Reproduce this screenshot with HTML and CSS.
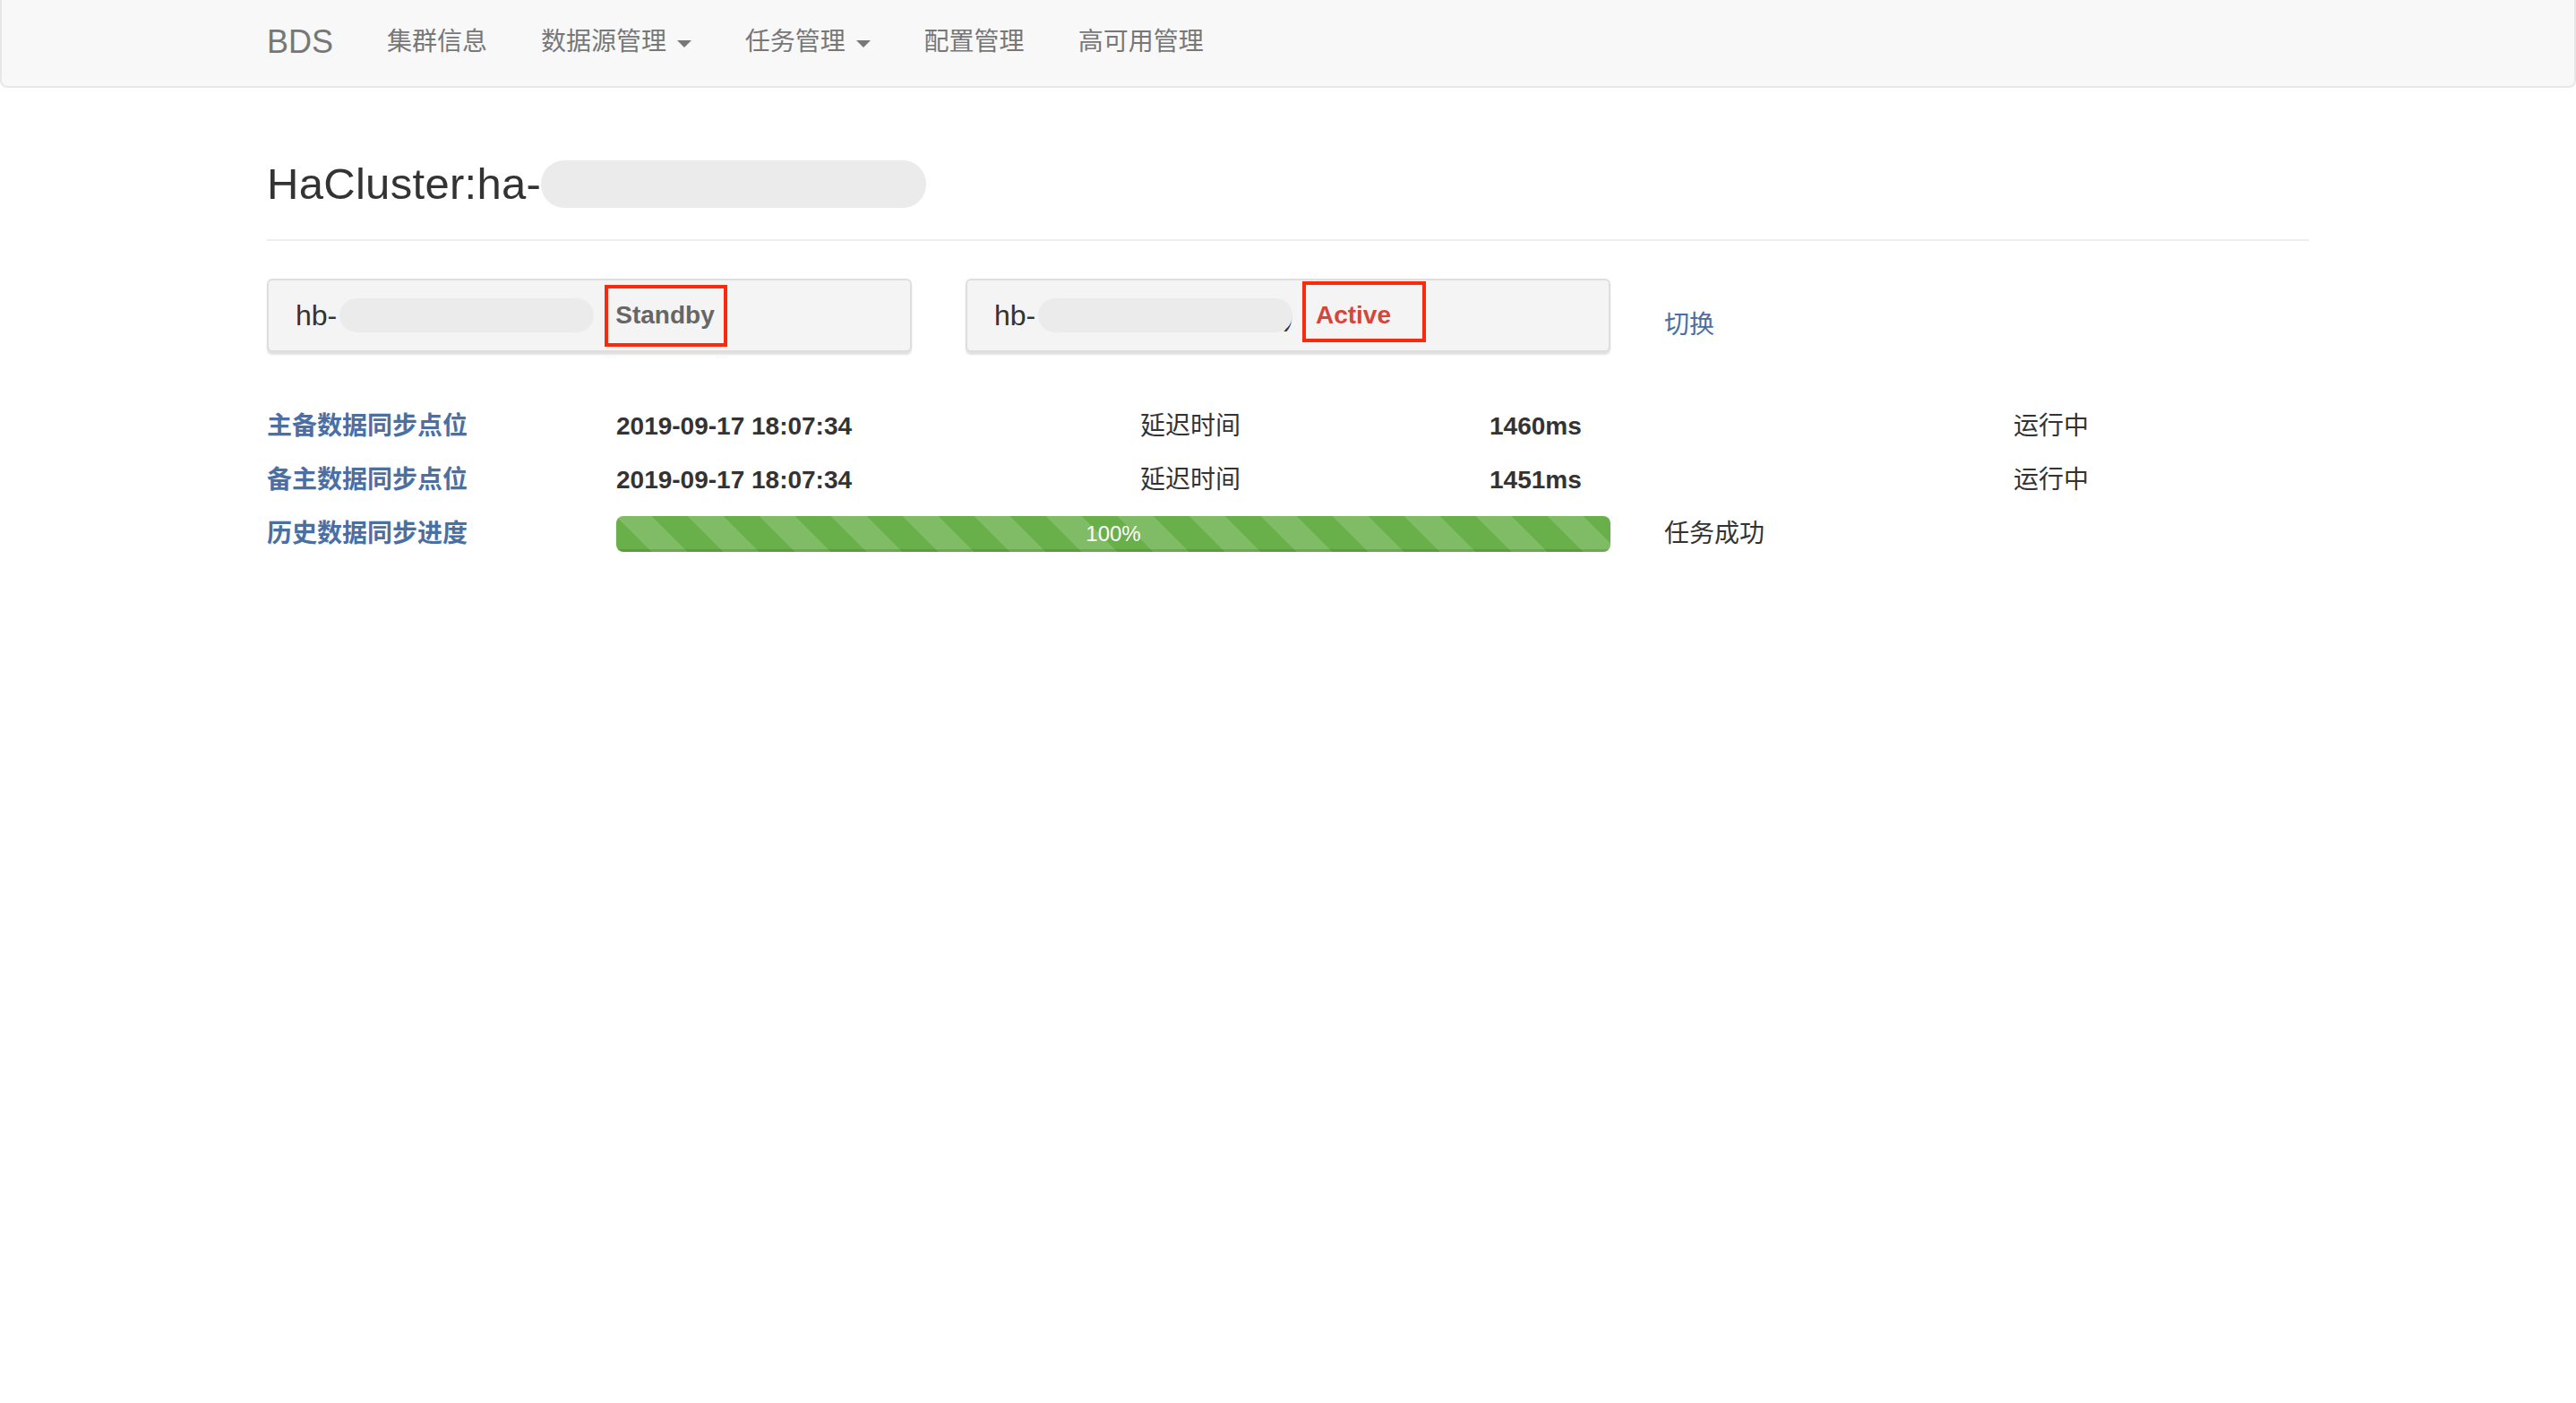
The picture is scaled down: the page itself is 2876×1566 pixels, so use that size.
FILE: index.html
```html
<!DOCTYPE html>
<html lang="zh-CN">
<head>
<meta charset="utf-8">
<title>BDS - HaCluster</title>
<link rel="stylesheet" href="styles.css">
</head>
<body>
<nav class="navbar">
  <div class="container nav-inner">
    <a class="brand" href="#">BDS</a>
    <ul class="nav">
      <li><a href="#">集群信息</a></li>
      <li><a href="#">数据源管理 <span class="caret"></span></a></li>
      <li><a href="#">任务管理 <span class="caret"></span></a></li>
      <li><a href="#">配置管理</a></li>
      <li><a href="#">高可用管理</a></li>
    </ul>
  </div>
</nav>

<main class="container">
  <div class="page-header">
    <h3>HaCluster:ha-<span class="blur blur-title"></span></h3>
  </div>

  <div class="grid nodes">
    <div class="span-4">
      <div class="node">hb-<span class="blur blur-1"></span><span class="state standby">Standby</span></div>
    </div>
    <div class="span-4">
      <div class="node">hb-<span class="blur blur-2"></span><span class="paren">)</span><span class="state active">Active</span></div>
    </div>
    <div class="span-4 switch-cell">
      <a class="switch" href="#">切换</a>
    </div>
  </div>

  <div class="grid sync-row">
    <div class="span-2"><a class="label" href="#">主备数据同步点位</a></div>
    <div class="span-3 strong">2019-09-17 18:07:34</div>
    <div class="span-2">延迟时间</div>
    <div class="span-3 strong">1460ms</div>
    <div class="span-2">运行中</div>
  </div>
  <div class="grid sync-row">
    <div class="span-2"><a class="label" href="#">备主数据同步点位</a></div>
    <div class="span-3 strong">2019-09-17 18:07:34</div>
    <div class="span-2">延迟时间</div>
    <div class="span-3 strong">1451ms</div>
    <div class="span-2">运行中</div>
  </div>
  <div class="grid sync-row">
    <div class="span-2"><a class="label" href="#">历史数据同步进度</a></div>
    <div class="span-6">
      <div class="progress"><div class="progress-bar" style="width: 100%">100%</div></div>
    </div>
    <div class="span-4">任务成功</div>
  </div>
</main>
</body>
</html>
```

FILE: styles.css
```css
html, body {
  margin: 0;
  padding: 0;
  background: #fff;
}

body {
  font-family: "Liberation Sans", "Noto Sans CJK SC", sans-serif;
  font-size: 28px;
  line-height: 40px;
  color: #333;
}

a {
  text-decoration: none;
}

.container {
  width: 2280px;
  margin: 0 auto;
}

/* Navbar */
.navbar {
  height: 98px;
  box-sizing: border-box;
  padding-bottom: 2px;
  background: #f8f8f8;
  border: 2px solid #e7e7e7;
  border-top: none;
  border-radius: 0 0 8px 8px;
}

.nav-inner {
  height: 100%;
  display: flex;
  align-items: center;
}

.brand {
  font-size: 36px;
  line-height: 40px;
  color: #777;
  padding-right: 30px;
}

.nav {
  display: flex;
  list-style: none;
  margin: 0;
  padding: 0;
}

.nav a {
  display: block;
  padding: 0 30px;
  font-size: 28px;
  line-height: 40px;
  color: #777;
}

.caret {
  display: inline-block;
  width: 0;
  height: 0;
  margin-left: 4px;
  vertical-align: middle;
  border-top: 8px solid #777;
  border-left: 8px solid transparent;
  border-right: 8px solid transparent;
}

/* Page header */
.page-header {
  margin: 81px 0 42px;
  padding-bottom: 15px;
  border-bottom: 2px solid #eee;
}

.page-header h3 {
  margin: 0 0 20px;
  font-size: 49px;
  letter-spacing: 0.3px;
  line-height: 53px;
  font-weight: normal;
  color: #333;
  display: flex;
  align-items: center;
}

.blur {
  display: inline-block;
  background: #ebebeb;
}

.blur-title {
  width: 430px;
  height: 53px;
  border-radius: 26px;
}

/* Grid */
.grid {
  display: grid;
  grid-template-columns: repeat(12, 1fr);
  column-gap: 60px;
}

.span-2 { grid-column: span 2; }
.span-3 { grid-column: span 3; }
.span-4 { grid-column: span 4; }
.span-6 { grid-column: span 6; }

/* Node cards */
.nodes {
  margin-bottom: 63px;
}

.node {
  height: 82px;
  box-sizing: border-box;
  display: flex;
  align-items: center;
  padding: 0 30px;
  background: #f4f4f4;
  border: 2px solid #dedede;
  border-radius: 6px;
  box-shadow: 0 3px 2px rgba(0, 0, 0, 0.12);
  font-size: 32px;
  line-height: 40px;
  color: #333;
}

.blur-1,
.blur-2 {
  height: 38px;
  border-radius: 19px;
  margin-left: 3px;
  position: relative;
  z-index: 1;
}

.blur-1 { width: 284px; }
.blur-2 { width: 284px; }

.paren {
  margin-left: -10px;
  color: #333;
}

.state {
  display: inline-block;
  font-size: 28px;
  line-height: 40px;
  font-weight: bold;
  border: 4px solid #fb2a0c;
}

.standby {
  color: #666;
  margin-left: 12px;
  padding: 10px 10px 11px 8px;
}

.active {
  color: #d3473a;
  margin-left: 10px;
  padding: 14px 35px 6px 11px;
  align-self: flex-start;
  margin-top: 1px;
}

.switch-cell {
  padding-top: 32px;
}

.switch {
  color: #4a6fa5;
}

/* Sync rows */
.sync-row {
  height: 40px;
  margin-bottom: 20px;
  align-items: center;
}

.label {
  color: #4a6fa5;
  font-weight: bold;
}

.strong {
  font-weight: bold;
}

.progress {
  height: 40px;
  background: #f5f5f5;
  border-radius: 8px;
  overflow: hidden;
}

.progress-bar {
  height: 40px;
  line-height: 40px;
  font-size: 24px;
  color: #fff;
  text-align: center;
  background-color: #6ab04a;
  background-image: linear-gradient(45deg,
    rgba(255, 255, 255, 0.15) 25%, transparent 25%,
    transparent 50%, rgba(255, 255, 255, 0.15) 50%,
    rgba(255, 255, 255, 0.15) 75%, transparent 75%, transparent);
  background-size: 80px 80px;
  box-shadow: inset 0 -3px 0 rgba(0, 0, 0, 0.12);
}
```
